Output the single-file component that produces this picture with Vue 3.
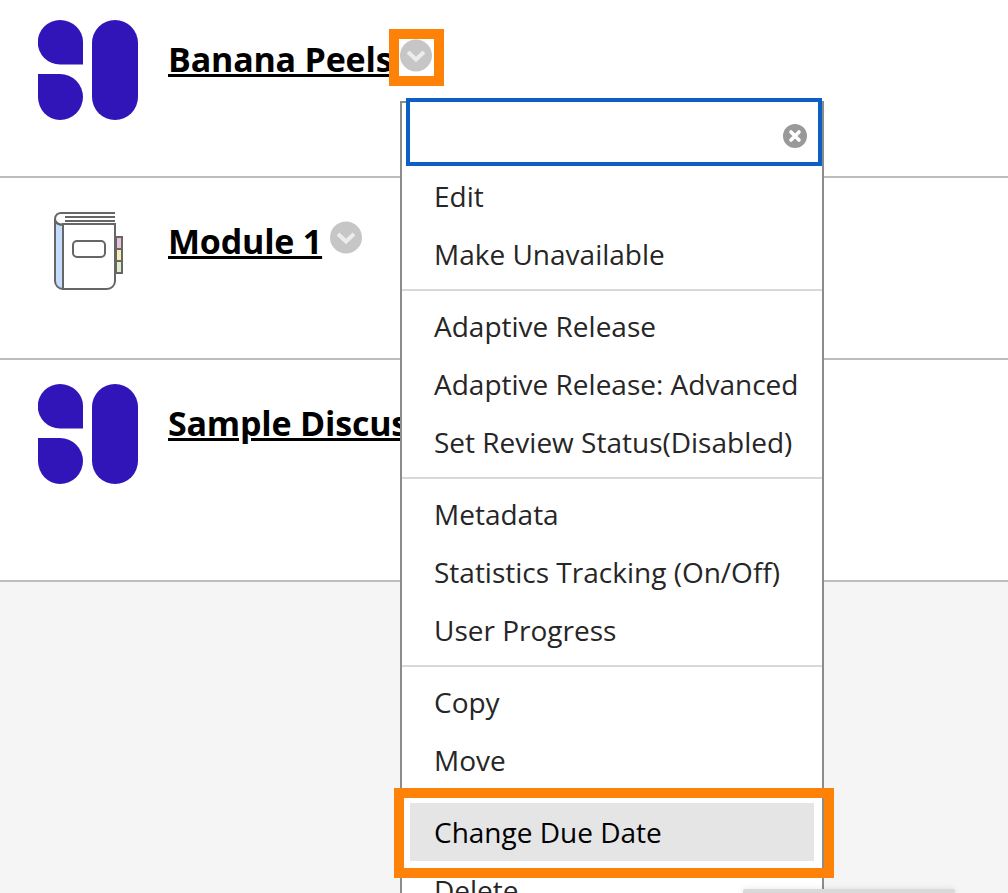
<template>
  <div class="page">
    <div class="list">
      <div v-for="row in rows" :key="row.title" class="row" :class="row.cls">
        <div class="row-icon">
          <svg v-if="row.icon === 'logo'" width="100" height="100" viewBox="0 0 100 100">
            <path d="M22 0 A23 22 0 0 1 45 22 V44.500 H22 A22 22 0 0 1 22 0 Z" fill="#3215b9" />
            <path d="M0 54 H22 A23 23 0 0 1 45 77 A23 23 0 0 1 22 100 A22 23 0 0 1 0 77 Z" fill="#3215b9" />
            <rect x="54" y="0" width="46" height="100" rx="23" fill="#3215b9" />
          </svg>
          <svg v-else width="100" height="100" viewBox="0 0 100 100" fill="none" stroke="#666" stroke-width="2">
            <rect x="78" y="35" width="6" height="12" fill="#e8c2da" />
            <rect x="78" y="47" width="6" height="12" fill="#f7eeb4" />
            <rect x="78" y="59" width="6" height="12" fill="#deedcb" />
            <path d="M17 17 V79 A8 8 0 0 0 25 87 V22 A5.5 5.5 0 0 1 17 17 Z" fill="#c6dcff" />
            <path d="M25 22 H77 V79 A8 8 0 0 1 69 87 H25 Z" fill="#fff" />
            <path d="M77 11 H24 A6 6 0 0 0 17 17 A6 6 0 0 0 25 22 H77" fill="#fff" />
            <path d="M27 15 H77 M27 19 H77" />
            <rect x="35" y="39" width="32" height="16" rx="4" fill="#fff" />
          </svg>
        </div>
        <a class="row-title">{{ row.title }}</a>
        <span class="chevron">
          <svg width="32" height="33" viewBox="0 0 32 33">
            <circle cx="16" cy="16.500" r="16" fill="#c6c6c6" />
            <path d="M8 13 L16 20.500 L24 13" fill="none" stroke="#ececec" stroke-width="4" />
          </svg>
          <span v-if="row.flagged" class="flag"></span>
        </span>
      </div>
    </div>
    <div class="footer-area"></div>

    <div class="menu">
      <div class="search">
        <svg class="search-clear" width="24" height="24" viewBox="0 0 24 24">
          <circle cx="12" cy="12" r="12" fill="#999" />
          <path d="M8 8 L16 16 M16 8 L8 16" stroke="#fff" stroke-width="3.600" stroke-linecap="round" />
        </svg>
      </div>
      <ul v-for="(group, i) in menu" :key="i" class="group">
        <li v-for="item in group" :key="item" class="item" :class="{ active: item === 'Change Due Date' }">{{ item }}</li>
      </ul>
    </div>
    <div class="footer-tab"></div>
  </div>
</template>

<script setup>
  const rows = [
    { title: 'Banana Peels', icon: 'logo', cls: 'first', flagged: true },
    { title: 'Module 1', icon: 'book', cls: 'second' },
    { title: 'Sample Discussion', icon: 'logo', cls: 'third' }
  ];

  const menu = [
    [ 'Edit', 'Make Unavailable' ],
    [ 'Adaptive Release', 'Adaptive Release: Advanced', 'Set Review Status(Disabled)' ],
    [ 'Metadata', 'Statistics Tracking (On/Off)', 'User Progress' ],
    [ 'Copy', 'Move' ],
    [ 'Change Due Date', 'Delete' ]
  ];
</script>

<style>
  body {
    margin: 0;
    overflow: hidden;
  }
</style>

<style scoped>
  .page {
    background: #f5f5f5;
    display: flex;
    flex-direction: column;
    font-family: "Open Sans", sans-serif;
    height: 893px;
    overflow: hidden;
    position: relative;
  }

  .list {
    background: #fff;
  }

  .row {
    align-items: flex-start;
    border-bottom: 2px solid #bdbdbd;
    display: flex;
    padding-left: 38px;
  }

  .row.first {
    height: 156px;
    padding-top: 20px;
  }

  .row.second {
    height: 156px;
    padding-top: 24px;
  }

  .row.third {
    height: 196px;
    padding-top: 24px;
  }

  .row-icon {
    height: 100px;
    margin-right: 30px;
    width: 100px;
  }

  .row-icon svg {
    display: block;
  }

  .row-title {
    color: #000;
    font-size: 34px;
    font-weight: 700;
    letter-spacing: -0.2px;
    line-height: 46px;
    margin-top: 16px;
    text-decoration: underline;
    white-space: nowrap;
  }

  .chevron {
    height: 33px;
    margin-left: 7.500px;
    margin-top: 19px;
    position: relative;
    width: 32px;
  }

  .chevron svg {
    display: block;
  }

  .flag {
    height: 37px;
    left: -1px;
    outline: 10px solid #ff8208;
    position: absolute;
    top: 0;
    width: 35px;
  }

  .footer-area {
    flex: 1;
  }

  .footer-tab {
    background: #d9d9d9;
    border-radius: 2px 2px 0 0;
    bottom: -4px;
    box-shadow: 0 0 6px rgba(0, 0, 0, 0.1);
    height: 8px;
    left: 743px;
    position: absolute;
    width: 212px;
  }

  .menu {
    background: #fff;
    border: 2px solid #8c8c8c;
    box-sizing: border-box;
    left: 400px;
    position: absolute;
    top: 101px;
    width: 424px;
  }

  .search {
    background: #fff;
    border: 4px solid #0d5fc4;
    box-sizing: border-box;
    height: 68px;
    margin: -5px 0 0 4px;
    position: relative;
    width: 416px;
  }

  .search-clear {
    position: absolute;
    right: 11px;
    top: 22px;
  }

  .group {
    border-bottom: 2px solid #d8d8d8;
    color: #262626;
    font-size: 28px;
    list-style: none;
    margin: 0;
    padding: 6px 0;
  }

  .group:last-child {
    border-bottom: 0;
    padding-top: 6px;
  }

  .group:first-of-type {
    padding-top: 1px;
  }

  .item {
    height: 58px;
    line-height: 58px;
    margin: 0 8px 0 8px;
    padding-left: 24px;
    position: relative;
    white-space: nowrap;
  }

  .item.active {
    background: #e5e5e5;
    color: #000;
  }

  .item.active::after {
    bottom: -7px;
    content: "";
    left: -6px;
    outline: 10px solid #ff8208;
    position: absolute;
    right: -10px;
    top: -5px;
  }
</style>
